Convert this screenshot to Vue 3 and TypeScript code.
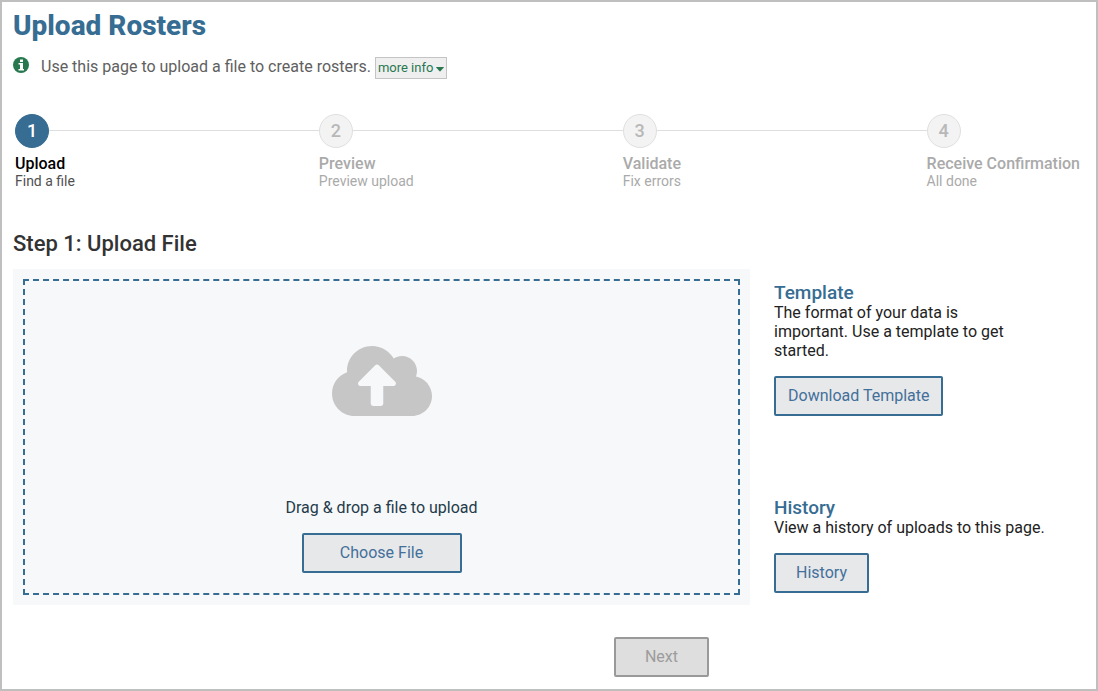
<script setup lang="ts">
interface Step {
  title: string
  note: string
}

const steps: Step[] = [
  { title: 'Upload', note: 'Find a file' },
  { title: 'Preview', note: 'Preview upload' },
  { title: 'Validate', note: 'Fix errors' },
  { title: 'Receive Confirmation', note: 'All done' },
]
const current = 0
</script>

<template>
  <main class="page">
    <h1>Upload Rosters</h1>

    <div class="intro">
      <svg class="info-icon" viewBox="0 0 16 16" aria-hidden="true">
        <circle cx="8" cy="8" r="8" />
        <path class="mark" d="M7 2.600h3v2.400H7zM5.500 6H10v6h1v1.500H5.500V12H7V7.500H5.500z" />
      </svg>
      <p>Use this page to upload a file to create rosters.</p>
      <button type="button" class="more">
        more info
        <svg viewBox="0 0 8 5" aria-hidden="true"><path d="M0.4 0h7.2q.6 0 .2.6L4.4 4.3q-.4.4-.8 0L.2.6Q-.2 0 .4 0z" /></svg>
      </button>
    </div>

    <ol class="steps">
      <li v-for="(step, i) in steps" :key="step.title" :class="{ active: i === current }">
        <div class="track"><span class="dot">{{ i + 1 }}</span></div>
        <strong>{{ step.title }}</strong>
        <span class="note">{{ step.note }}</span>
      </li>
    </ol>

    <h2>Step 1: Upload File</h2>

    <div class="columns">
      <section class="panel">
        <div class="dropzone">
          <svg class="cloud" viewBox="0 0 640 512" aria-hidden="true">
            <path d="M537.6 226.6c4.1-10.7 6.4-22.4 6.4-34.6 0-53-43-96-96-96-19.7 0-38.1 6-53.3 16.2C367 64.2 315.3 32 256 32c-88.4 0-160 71.6-160 160 0 2.7.1 5.4.2 8.1C40.2 219.8 0 273.2 0 336c0 79.5 64.5 144 144 144h368c70.7 0 128-57.3 128-128 0-61.9-44-113.6-102.4-125.4zM393.4 288H328v112c0 8.8-7.2 16-16 16h-48c-8.8 0-16-7.2-16-16V288h-65.4c-14.3 0-21.4-17.2-11.3-27.4l105.4-105.4c6.2-6.2 16.4-6.2 22.6 0l105.4 105.4c10.1 10.2 2.9 27.4-11.3 27.4z" />
          </svg>
          <p>Drag &amp; drop a file to upload</p>
          <button type="button" class="btn choose">Choose File</button>
        </div>
      </section>

      <aside>
        <section>
          <h3>Template</h3>
          <p>The format of your data is important. Use a template to get started.</p>
          <button type="button" class="btn">Download Template</button>
        </section>
        <section>
          <h3>History</h3>
          <p class="wide">View a history of uploads to this page.</p>
          <button type="button" class="btn">History</button>
        </section>
      </aside>
    </div>

    <footer>
      <button type="button" class="btn" disabled>Next</button>
    </footer>
  </main>
</template>

<style>
body {
  margin: 0;
  background: #fff;
}
</style>

<style scoped>
.page {
  box-sizing: border-box;
  min-height: 100vh;
  padding: 8px 11px 12px;
  border: 2px solid #bfbfbf;
  background: #fff;
  color: #222;
  font-family: Roboto, "Liberation Sans", sans-serif;
  font-size: 16px;
  line-height: 19px;
}

h1,
h2,
h3,
p,
ol {
  margin: 0;
  padding: 0;
}

button {
  font-family: inherit;
  cursor: pointer;
}

h1 {
  color: #376d92;
  font-size: 28px;
  font-weight: 800;
  line-height: 32px;
}

.intro {
  display: flex;
  align-items: flex-start;
  margin-top: 15px;
  color: #606060;
}

.info-icon {
  width: 16px;
  height: 16px;
  margin-right: 12px;
  fill: #28784f;
}

.info-icon .mark {
  fill: #fff;
}

.more {
  display: flex;
  align-items: center;
  gap: 3px;
  height: 22px;
  margin-left: 4px;
  padding: 0 2px 1px;
  border: 1px solid #c4c4c4;
  background: #efefef;
  color: #28784f;
  font-size: 13px;
}

.more svg {
  width: 8px;
  height: 5px;
  margin-top: 4px;
  fill: #28784f;
}

.steps {
  display: grid;
  grid-template-columns: repeat(3, 1fr) auto;
  margin: 35px 5px 0 2px;
  list-style: none;
  color: #aaa;
}

.track {
  display: flex;
  align-items: center;
  margin-bottom: 6px;
}

li:not(:last-child) .track::after {
  content: "";
  flex: 1;
  height: 1px;
  margin-bottom: 1px;
  background: #dedede;
}

.dot {
  box-sizing: border-box;
  width: 34px;
  height: 34px;
  border: 1px solid #e0e0e0;
  border-radius: 50%;
  background: #f3f3f3;
  color: #b8b8b8;
  font-size: 18px;
  font-weight: 500;
  line-height: 32px;
  text-align: center;
}

.steps strong,
.note {
  display: block;
}

.steps strong {
  font-weight: 500;
}

.note {
  font-size: 14px;
  line-height: 16px;
}

.active strong {
  color: #000;
}

.active .note {
  color: #505050;
}

.active .dot {
  border-color: #376d92;
  background: #376d92;
  color: #fff;
}

h2 {
  margin-top: 42px;
  color: #333;
  font-size: 22px;
  font-weight: 500;
  line-height: 26px;
}

.columns {
  display: grid;
  grid-template-columns: minmax(0, 1fr) 311px;
  gap: 24px;
  margin-top: 12px;
}

.panel {
  padding: 10px;
  background: #f7f8fa;
}

.dropzone {
  display: flex;
  flex-direction: column;
  align-items: center;
  padding: 60px 20px 20px;
  border: 2px dashed #376d92;
  color: #243b4a;
}

.cloud {
  width: 100px;
  height: 80px;
  margin-bottom: 77px;
  fill: #c6c6c6;
}

.btn {
  box-sizing: border-box;
  min-width: 95px;
  height: 40px;
  padding: 0 12px 2px;
  border: 2px solid #376d92;
  border-radius: 2px;
  background: #e7e8ea;
  color: #43709a;
  font-size: 16px;
}

.choose {
  min-width: 160px;
  margin-top: 16px;
}

.btn:disabled {
  border-color: #999;
  background: #dedede;
  color: #9c9c9c;
  cursor: default;
}

aside {
  display: flex;
  flex-direction: column;
  justify-content: space-between;
  padding: 13px 0 12px;
}

h3 {
  color: #376d92;
  font-size: 19px;
  font-weight: 500;
  line-height: 21px;
}

aside p {
  max-width: 250px;
  margin-bottom: 16px;
}

aside .wide {
  max-width: none;
}

footer {
  display: flex;
  justify-content: center;
  margin-top: 32px;
  padding-left: 225px;
}
</style>
